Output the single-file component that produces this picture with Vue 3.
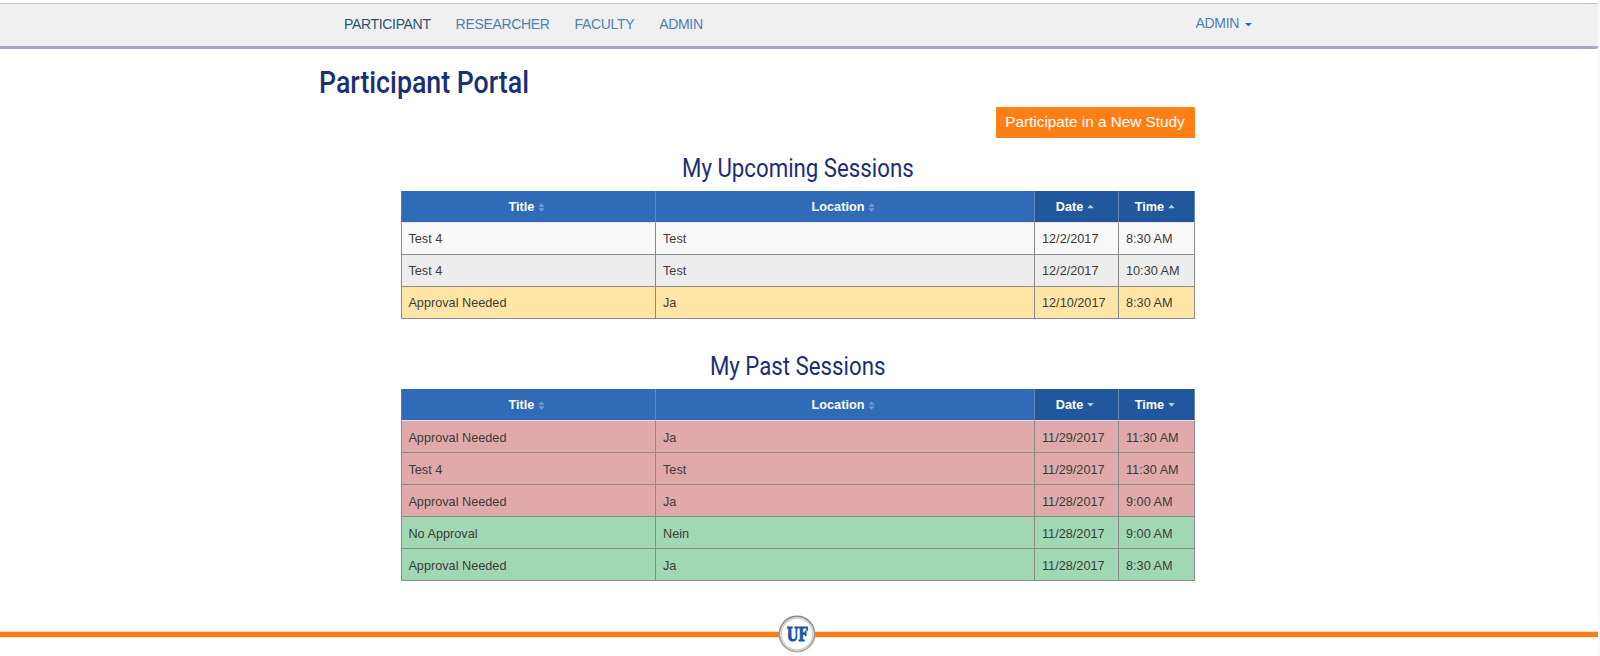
<script setup>
const navItems = ['PARTICIPANT', 'RESEARCHER', 'FACULTY', 'ADMIN']
const columns = ['Title', 'Location', 'Date', 'Time']
const sections = [
  {
    key: 'upcoming',
    heading: 'My Upcoming Sessions',
    order: 'asc',
    rows: [
      { tone: 'odd', cells: ['Test 4', 'Test', '12/2/2017', '8:30 AM'] },
      { tone: 'even', cells: ['Test 4', 'Test', '12/2/2017', '10:30 AM'] },
      { tone: 'pending', cells: ['Approval Needed', 'Ja', '12/10/2017', '8:30 AM'] },
    ],
  },
  {
    key: 'past',
    heading: 'My Past Sessions',
    order: 'desc',
    rows: [
      { tone: 'missed', cells: ['Approval Needed', 'Ja', '11/29/2017', '11:30 AM'] },
      { tone: 'missed', cells: ['Test 4', 'Test', '11/29/2017', '11:30 AM'] },
      { tone: 'missed', cells: ['Approval Needed', 'Ja', '11/28/2017', '9:00 AM'] },
      { tone: 'done', cells: ['No Approval', 'Nein', '11/28/2017', '9:00 AM'] },
      { tone: 'done', cells: ['Approval Needed', 'Ja', '11/28/2017', '8:30 AM'] },
    ],
  },
]
</script>

<template>
  <div class="page">
    <header class="topbar">
      <nav class="nav">
        <a v-for="(item, i) in navItems" :key="item" class="nav-link" :class="{ active: i === 0 }">{{ item }}</a>
      </nav>
      <a class="account">ADMIN
        <svg class="caret" width="7" height="4" viewBox="0 0 7 4"><path d="M0 0H7L3.5 3.6Z" fill="#2f6fb0" /></svg>
      </a>
    </header>
    <main class="content">
      <h1 class="title"><span>Participant Portal</span></h1>
      <div class="actions"><button class="join">Participate in a New Study</button></div>
      <section v-for="s in sections" :key="s.key" class="section" :class="s.key">
        <h2 class="heading"><span>{{ s.heading }}</span></h2>
        <table class="grid">
          <colgroup><col class="c1" /><col class="c2" /><col class="c3" /><col class="c4" /></colgroup>
          <thead>
            <tr>
              <th v-for="(c, i) in columns" :key="c" :class="{ sorted: i > 1 }">
                <div class="head">
                  <span>{{ c }}</span>
                  <svg class="sort" width="7" height="9" viewBox="0 0 7 9">
                    <g v-if="i < 2" fill="#7398cf"><path d="M0.3 3.7L3.5 0.3L6.7 3.7Z" /><path d="M0.3 5.3H6.7L3.5 8.7Z" /></g>
                    <path v-else-if="s.order === 'asc'" d="M0.2 5.3L3.5 1.8L6.8 5.3Z" fill="#b5cae6" />
                    <path v-else d="M0.2 2H6.8L3.5 5.5Z" fill="#b5cae6" />
                  </svg>
                </div>
              </th>
            </tr>
          </thead>
          <tbody>
            <tr v-for="(r, ri) in s.rows" :key="ri" :class="r.tone">
              <td v-for="(c, ci) in r.cells" :key="ci">{{ c }}</td>
            </tr>
          </tbody>
        </table>
      </section>
    </main>
    <footer class="footer">
      <svg class="logo" width="40" height="40" viewBox="0 0 40 40">
        <defs>
          <linearGradient id="rim" x1="0" y1="0" x2="0" y2="1">
            <stop offset="0" stop-color="#8c8c8c" /><stop offset="1" stop-color="#a9a9a9" />
          </linearGradient>
        </defs>
        <circle cx="20" cy="20" r="17.6" fill="#fff" stroke="url(#rim)" stroke-width="1.8" />
        <circle cx="20" cy="20" r="15.8" fill="#fff" stroke="#cfcfcf" stroke-width="1.4" />
        <text x="9.8" y="27.4" textLength="21" lengthAdjust="spacingAndGlyphs" class="uf">UF</text>
      </svg>
    </footer>
  </div>
</template>

<style>
html, body { background: #fff; overflow: hidden; }
</style>

<style scoped>
* { box-sizing: border-box; }
.page {
  width: 1600px;
  height: 656px;
  padding-top: 3px;
  display: flex;
  flex-direction: column;
  background: #fff;
  border-right: 2px solid #f8f8f8;
  font-family: "Liberation Sans", Arial, sans-serif;
}
.topbar {
  width: 1598px;
  height: 46px;
  flex: none;
  display: flex;
  justify-content: space-between;
  padding: 0 346px 0 344px;
  background: #f0f0f0;
  border-top: 1px solid #bac6d0;
  border-bottom: 3px solid #a3a8c8;
  border-radius: 0 2px 2px 0;
  font-size: 14px;
  letter-spacing: -0.33px;
  color: #4a80b5;
}
.nav { display: flex; gap: 25px; padding-top: 12px; line-height: 16px; }
.nav-link.active { color: #2c5374; }
.account { padding-top: 11px; line-height: 16px; display: flex; }
.caret { margin: 8px 0 0 6px; }
.content { width: 876px; margin-left: 319px; flex: none; }
.title { margin: 0; padding-top: 13px; height: 58px; font: 500 31px/42px Roboto, sans-serif; color: #1c2f75; }
.title span, .heading span { display: inline-block; white-space: nowrap; }
.title span { transform: scaleX(0.862); transform-origin: 0 50%; }
.actions { display: flex; justify-content: flex-end; height: 31px; }
.join {
  width: 199px;
  height: 31px;
  padding: 0 1px 2px 0;
  border: 0;
  border-radius: 1px;
  background: #ff7f17;
  color: #fff;
  font: 15.3px/29px "Liberation Sans", Arial, sans-serif;
}
.section { width: 794px; margin-left: 82px; }
.heading {
  margin: 0;
  height: 53px;
  padding-top: 10px;
  text-align: center;
  font: 400 25.5px/40px Roboto, sans-serif;
  color: #1c2f75;
}
.heading span { transform: scaleX(0.872); }
.past .heading { height: 70px; padding-top: 27px; }
.grid {
  width: 794px;
  table-layout: fixed;
  border-collapse: separate;
  border-spacing: 0;
  font-size: 12.7px;
  color: #3b3b3b;
}
.c1 { width: 255px; }
.c2 { width: 379px; }
.c3 { width: 84px; }
.c4 { width: 76px; }
th {
  height: 32px;
  padding: 1px 3px 0 0;
  background: #306bb7;
  color: #fff;
  border-right: 1px solid #6886ab;
  border-bottom: 1px solid #e1e3e8;
  line-height: 15px;
}
th.sorted { background: #20579d; }
th:first-child, td:first-child { border-left: 1px solid #8a8a8a; }
th:first-child { border-left-color: #5e7ca3; }
.head { display: flex; align-items: center; justify-content: center; gap: 4px; }
.sort { flex: none; }
td {
  height: 32px;
  padding: 2px 0 0 7px;
  line-height: 15px;
  border-right: 1px solid #8a8a8a;
  border-bottom: 1px solid #8a8a8a;
}
td:first-child { padding-left: 6.4px; }
.past td { padding-top: 3px; }
.odd td { background: #f9f9f9; }
.even td { background: #ededed; }
.pending td { background: #ffe6a6; }
.missed td { background: #e0aaaa; }
.done td { background: #a2d7b3; }
.footer {
  margin-top: auto;
  height: 42px;
  width: 1598px;
  padding: 0 0 0 777px;
  background:
    linear-gradient(#ff7b14, #ff7b14) 0 18px / 100% 5px no-repeat,
    linear-gradient(#ffe3d0, #ffe3d0) 0 17px / 100% 7px no-repeat;
}
.logo { display: block; }
.uf { font: bold 19px "DejaVu Serif", serif; fill: #1a559f; stroke: #1a559f; stroke-width: 1px; }
</style>
